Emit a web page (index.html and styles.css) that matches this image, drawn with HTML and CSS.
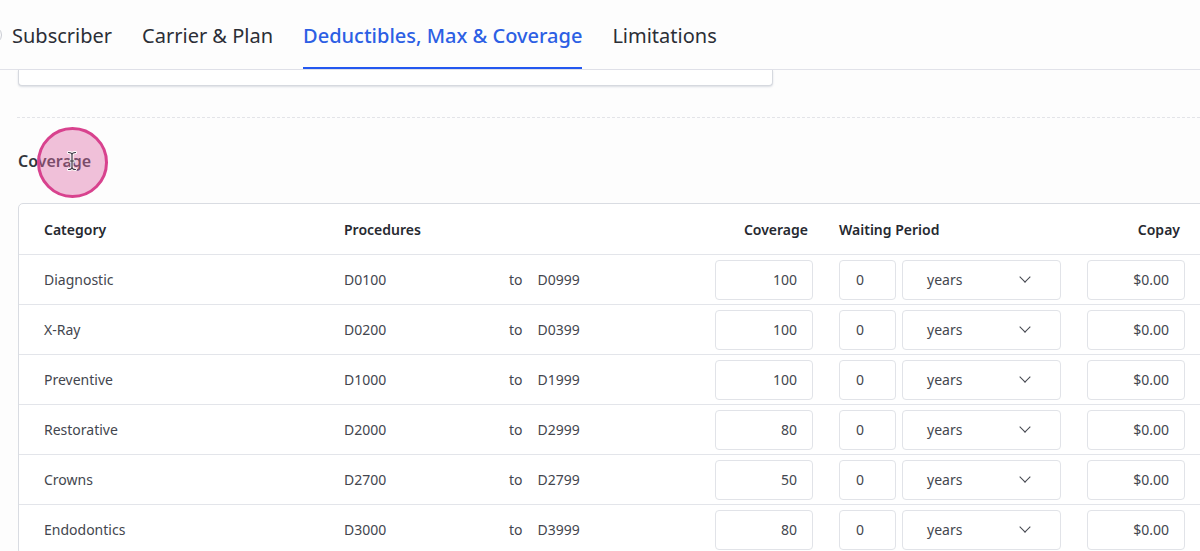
FILE: index.html
```html
<!DOCTYPE html>
<html lang="en">
<head>
    <meta charset="UTF-8">
    <meta name="viewport" content="width=device-width, initial-scale=1.0">
    <title>Deductibles, Max &amp; Coverage</title>
    <link rel="stylesheet" href="styles.css">
</head>
<body>

<nav class="tabs">
    <div class="tab">
        <span class="tab-icon"></span>
        <span class="tab-label">Subscriber</span>
    </div>
    <div class="tab"><span class="tab-label">Carrier &amp; Plan</span></div>
    <div class="tab active"><span class="tab-label">Deductibles, Max &amp; Coverage</span></div>
    <div class="tab"><span class="tab-label">Limitations</span></div>
</nav>

<div class="content">
    <!-- bottom of the card from the section above -->
    <div class="prev-card"></div>

    <hr class="divider">

    <div class="section-head">
        <h2>Coverage</h2>
        <div class="click-marker">
            <svg class="ibeam" width="10" height="20" viewBox="0 0 10 20">
                <path d="M1.5 1.5 Q5 1.5 5 4 Q5 1.5 8.5 1.5 M5 4 V16 M1.5 18.5 Q5 18.5 5 16 Q5 18.5 8.5 18.5 M3 10 H7" fill="none" stroke="#fff" stroke-width="3" stroke-linecap="round"/>
                <path d="M1.5 1.5 Q5 1.5 5 4 Q5 1.5 8.5 1.5 M5 4 V16 M1.5 18.5 Q5 18.5 5 16 Q5 18.5 8.5 18.5 M3 10 H7" fill="none" stroke="#3a3340" stroke-width="1.2" stroke-linecap="round"/>
            </svg>
        </div>
    </div>

    <div class="coverage-card">
        <div class="row head">
            <div class="cell cat">Category</div>
            <div class="cell proc">Procedures</div>
            <div class="cell"></div>
            <div class="cell num">Coverage</div>
            <div class="cell wait">Waiting Period</div>
            <div class="cell num copay-head">Copay</div>
        </div>

        <div class="row">
            <div class="cell cat">Diagnostic</div>
            <div class="cell proc">D0100</div>
            <div class="cell range"><span class="to">to</span>D0999</div>
            <div class="cell"><div class="field num">100</div></div>
            <div class="cell wait">
                <div class="field small">0</div>
                <div class="field select">years<span class="chev"></span></div>
            </div>
            <div class="cell"><div class="field num">$0.00</div></div>
        </div>

        <div class="row">
            <div class="cell cat">X-Ray</div>
            <div class="cell proc">D0200</div>
            <div class="cell range"><span class="to">to</span>D0399</div>
            <div class="cell"><div class="field num">100</div></div>
            <div class="cell wait">
                <div class="field small">0</div>
                <div class="field select">years<span class="chev"></span></div>
            </div>
            <div class="cell"><div class="field num">$0.00</div></div>
        </div>

        <div class="row">
            <div class="cell cat">Preventive</div>
            <div class="cell proc">D1000</div>
            <div class="cell range"><span class="to">to</span>D1999</div>
            <div class="cell"><div class="field num">100</div></div>
            <div class="cell wait">
                <div class="field small">0</div>
                <div class="field select">years<span class="chev"></span></div>
            </div>
            <div class="cell"><div class="field num">$0.00</div></div>
        </div>

        <div class="row">
            <div class="cell cat">Restorative</div>
            <div class="cell proc">D2000</div>
            <div class="cell range"><span class="to">to</span>D2999</div>
            <div class="cell"><div class="field num">80</div></div>
            <div class="cell wait">
                <div class="field small">0</div>
                <div class="field select">years<span class="chev"></span></div>
            </div>
            <div class="cell"><div class="field num">$0.00</div></div>
        </div>

        <div class="row">
            <div class="cell cat">Crowns</div>
            <div class="cell proc">D2700</div>
            <div class="cell range"><span class="to">to</span>D2799</div>
            <div class="cell"><div class="field num">50</div></div>
            <div class="cell wait">
                <div class="field small">0</div>
                <div class="field select">years<span class="chev"></span></div>
            </div>
            <div class="cell"><div class="field num">$0.00</div></div>
        </div>

        <div class="row">
            <div class="cell cat">Endodontics</div>
            <div class="cell proc">D3000</div>
            <div class="cell range"><span class="to">to</span>D3999</div>
            <div class="cell"><div class="field num">80</div></div>
            <div class="cell wait">
                <div class="field small">0</div>
                <div class="field select">years<span class="chev"></span></div>
            </div>
            <div class="cell"><div class="field num">$0.00</div></div>
        </div>
    </div>
</div>

</body>
</html>
```

FILE: styles.css
```css
body {
    font-family: "Noto Sans", "Open Sans", sans-serif;
    margin: 0;
    padding: 0;
    background-color: #fdfdfd;
    color: #43464e;
    overflow: hidden;
    height: 551px;
}

/* tabs */
.tabs {
    display: flex;
    gap: 30px;
    height: 70px;
    border-bottom: 1px solid #e1e2e9;
    box-sizing: border-box;
    padding-left: 15px;
    overflow: hidden;
}
.tab {
    display: flex;
    align-items: center;
    position: relative;
    font-size: 20px;
    color: #2b2e36;
    padding-top: 1px;
}
.tab-icon {
    width: 18px;
    height: 18px;
    border: 1.5px solid #c9ccd3;
    border-radius: 50%;
    margin-left: -31px;
    margin-right: 10px;
    box-sizing: border-box;
}
.tab.active {
    color: #2c5fe4;
    font-weight: 500;
}
.tab.active::after {
    content: "";
    position: absolute;
    left: 0;
    right: 0;
    bottom: -1px;
    height: 3px;
    background-color: #2458f0;
}

.content {
    padding-left: 18px;
}
.prev-card {
    width: 753px;
    height: 15px;
    border: 1px solid #d6d9df;
    border-top: none;
    border-radius: 0 0 4px 4px;
    box-shadow: 0 1px 2px rgba(120, 130, 150, 0.25);
    background-color: #fff;
}
.divider {
    border: none;
    border-top: 1px dashed #e3e4e8;
    margin: 31px 0 0 -1px;
}

.section-head {
    position: relative;
    height: 85px;
}
.section-head h2 {
    margin: 0;
    padding-top: 32px;
    font-size: 16px;
    font-weight: 600;
    color: #33363d;
}
.click-marker {
    position: absolute;
    left: 19px;
    top: 9px;
    width: 65px;
    height: 65px;
    border: 3px solid #d8428e;
    border-radius: 50%;
    background-color: rgba(222, 107, 167, 0.42);
    display: flex;
    align-items: center;
    justify-content: center;
}
.ibeam {
    margin-left: -2px;
    margin-top: -3px;
}

/* coverage table */
.coverage-card {
    width: 1240px;
    border: 1px solid #d9dce2;
    border-radius: 5px;
    background-color: #fff;
}
.row {
    display: grid;
    grid-template-columns: 325px 165px 206px 98px 274px 98px;
    height: 50px;
    box-sizing: border-box;
    align-items: center;
    font-size: 14px;
    border-top: 1px solid #e3e5ea;
}
.row.head {
    border-top: none;
    height: 50px;
    font-weight: 600;
    color: #262930;
}
.cell.cat {
    padding-left: 25px;
}
.cell.num {
    text-align: right;
}
.row.head .cell.num {
    padding-right: 5px;
}
.row.head .copay-head {
    padding-right: 4px;
}
.cell.wait {
    display: flex;
    gap: 6px;
    padding-left: 26px;
}
.row.head .cell.wait {
    display: block;
}
.to {
    margin-right: 15px;
}
.field {
    height: 40px;
    box-sizing: border-box;
    border: 1px solid #e1e3e8;
    border-radius: 4px;
    background-color: #fff;
    display: flex;
    align-items: center;
    color: #43464e;
}
.field.num {
    justify-content: flex-end;
    padding-right: 15px;
}
.field.small {
    width: 57px;
    padding-left: 16px;
}
.field.select {
    width: 159px;
    padding-left: 24px;
    justify-content: space-between;
    padding-right: 31px;
}
.chev {
    width: 7px;
    height: 7px;
    border-right: 1.5px solid #43464e;
    border-bottom: 1.5px solid #43464e;
    transform: rotate(45deg);
    margin-top: -5px;
}
```
